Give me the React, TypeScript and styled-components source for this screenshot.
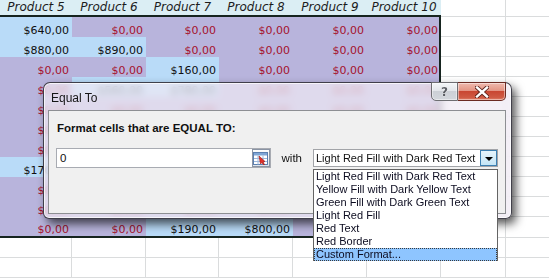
import React from 'react';
import styled, { createGlobalStyle } from 'styled-components';

const GlobalStyle = createGlobalStyle`
  * { box-sizing: border-box; }
  html, body { margin: 0; padding: 0; background: #ffffff; overflow: hidden; }
  body { width: 549px; height: 278px; }
`;

const COLS = [72, 74, 73, 74, 74, 74];
const PRODUCTS = ['Product 5', 'Product 6', 'Product 7', 'Product 8', 'Product 9', 'Product 10'];

type Cell = { v: string; hit?: boolean };
const z: Cell = { v: '$0,00' };
const b = (v: string): Cell => ({ v, hit: true });

const ROWS: Cell[][] = [
  [b('$640,00'), z, z, z, z, z],
  [b('$880,00'), b('$890,00'), z, z, z, z],
  [z, z, b('$160,00'), z, z, z],
  [z, b('$560,00'), b('$780,00'), z, z, z],
  [z, z, z, z, z, z],
  [z, z, z, b('$420,00'), z, z],
  [z, z, z, z, z, z],
  [b('$170,00'), z, z, z, z, z],
  [z, z, b('$330,00'), z, z, z],
  [z, z, z, z, z, z],
  [z, z, b('$190,00'), b('$800,00'), z, z],
];

const OPTIONS = [
  'Light Red Fill with Dark Red Text',
  'Yellow Fill with Dark Yellow Text',
  'Green Fill with Dark Green Text',
  'Light Red Fill',
  'Red Text',
  'Red Border',
  'Custom Format...',
];

const Page = styled.div`
  position: relative;
  width: 549px;
  height: 278px;
  overflow: hidden;
`;

const Sheet = styled.div`
  display: grid;
  grid-template-columns: ${COLS.map((c) => `${c}px`).join(' ')} 65px 1fr;
  grid-template-rows: 17px repeat(10, 20px) 21px 20px 20px;
  font-family: 'DejaVu Sans', Verdana, sans-serif;
`;

const HeadCell = styled.div`
  background: #dbeef4;
  border-bottom: 2px solid #16241f;
  display: flex;
  align-items: center;
  justify-content: center;
  font-size: 12px;
  font-style: italic;
  color: #1c1c1c;
  line-height: 15px;
  white-space: nowrap;
`;

const DataCell = styled.div<{ $hit?: boolean; $lastCol?: boolean; $lastRow?: boolean }>`
  background: ${(p) => (p.$hit ? '#b9dbf8' : '#b8b4dc')};
  color: ${(p) => (p.$hit ? '#101010' : '#a5122c')};
  display: flex;
  align-items: flex-end;
  justify-content: flex-end;
  padding-right: ${(p) => (p.$lastCol ? '1px' : '3px')};
  font-size: 11px;
  line-height: 13px;
  white-space: nowrap;
  border-right: ${(p) => (p.$lastCol ? '2px solid #16241f' : 'none')};
  border-bottom: ${(p) => (p.$lastRow ? '2px solid #16241f' : 'none')};
`;

const EmptyCell = styled.div<{ $noRight?: boolean }>`
  background: #ffffff;
  border-bottom: 1px solid #dadcdd;
  border-right: ${(p) => (p.$noRight ? 'none' : '1px solid #dadcdd')};
`;

const Dialog = styled.div`
  position: absolute;
  left: 43px;
  top: 82px;
  width: 469px;
  height: 137px;
  border: 1px solid rgba(35, 35, 45, 0.85);
  border-radius: 7px 7px 6px 6px;
  background: rgba(240, 234, 244, 0.7);
  backdrop-filter: blur(3.5px);
  box-shadow: 4px 5px 10px rgba(0, 0, 0, 0.65), inset 0 0 0 1px rgba(255, 255, 255, 0.7);
  display: flex;
  flex-direction: column;
  padding: 0 5px 4px 4px;
  font-family: 'Liberation Sans', Arial, sans-serif;
`;

const TitleBar = styled.div`
  height: 27px;
  display: flex;
  align-items: flex-start;
`;

const Title = styled.div`
  flex: 1;
  align-self: center;
  padding-left: 3px;
  padding-top: 2px;
  font-size: 12px;
  color: #151515;
`;

const CaptionButtons = styled.div`
  display: flex;
  margin-top: -1px;
`;

const CaptionButton = styled.div<{ $close?: boolean }>`
  width: ${(p) => (p.$close ? '48px' : '27px')};
  height: 19px;
  display: flex;
  align-items: center;
  justify-content: center;
  border: 1px solid ${(p) => (p.$close ? '#6b2a22' : '#6e6e72')};
  border-left: ${(p) => (p.$close ? 'none' : '1px solid #6e6e72')};
  border-radius: ${(p) => (p.$close ? '0 0 5px 0' : '0 0 0 5px')};
  background: ${(p) =>
    p.$close
      ? 'linear-gradient(#efb9ae 0%, #e39584 45%, #c94732 50%, #cf5a43 85%, #e0826b 100%)'
      : 'linear-gradient(#f4f6f8 0%, #e3e6ea 45%, #ccd0d6 50%, #d3d7dc 100%)'};
  box-shadow: inset 0 0 0 1px rgba(255, 255, 255, 0.45);
`;

const HelpGlyph = styled.span`
  font-family: 'DejaVu Sans', sans-serif;
  font-weight: bold;
  font-size: 12px;
  color: #5a5d63;
  text-shadow: 0 0 1px #fff, 0 0 1px #fff;
  line-height: 1;
`;

const Client = styled.div`
  flex: 1;
  background: #f0f0f0;
  border: 1px solid #8d8f93;
  padding: 10px 7px 0 7px;
  display: flex;
  flex-direction: column;
`;

const Prompt = styled.div`
  font-weight: bold;
  font-size: 11.5px;
  color: #111;
  line-height: 14px;
  padding-left: 1px;
`;

const FieldRow = styled.div`
  margin-top: 13px;
  display: flex;
  align-items: center;
`;

const RefInput = styled.div`
  width: 215px;
  height: 20px;
  background: #fff;
  border: 1px solid #a8abb2;
  display: flex;
  align-items: center;
  justify-content: space-between;
  padding: 0 0 0 3px;
  font-size: 11.5px;
  color: #111;
`;

const RefButton = styled.div`
  width: 18px;
  height: 18px;
  border: 1px solid #8a94a4;
  background: linear-gradient(#fdfdfd, #dfe4ea);
  display: flex;
  align-items: center;
  justify-content: center;
`;

const WithLabel = styled.span`
  margin: 0 11px;
  font-size: 11.5px;
  color: #111;
`;

const SelectWrap = styled.div`
  position: relative;
`;

const SelectBox = styled.div`
  width: 185px;
  height: 18px;
  background: #fff;
  border: 1px solid #a2a4a8;
  display: flex;
  align-items: center;
  justify-content: space-between;
  padding-left: 2px;
  font-size: 11px;
  color: #111;
  white-space: nowrap;
`;

const DropButton = styled.div`
  width: 17px;
  height: 16px;
  border: 1px solid #3c7fb1;
  background: linear-gradient(#e5f4fc, #c4e5f6);
  display: flex;
  align-items: center;
  justify-content: center;
`;

const Arrow = styled.div`
  width: 0;
  height: 0;
  border-left: 4px solid transparent;
  border-right: 4px solid transparent;
  border-top: 4px solid #000;
  margin-top: 2px;
`;

const ListBox = styled.div`
  position: absolute;
  top: 20px;
  left: 0;
  width: 185px;
  height: 92px;
  background: #fff;
  border: 1px solid #646464;
  display: flex;
  flex-direction: column;
`;

const Option = styled.div<{ $selected?: boolean }>`
  height: 13px;
  line-height: 13px;
  padding-left: 2px;
  font-size: 11px;
  color: #0c0c20;
  white-space: nowrap;
  background: ${(p) => (p.$selected ? '#8ec5ff' : 'transparent')};
  outline: ${(p) => (p.$selected ? '1px dotted #3a3a3a' : 'none')};
  outline-offset: -1px;
`;

const RefIcon = () => (
  <svg width="15" height="13" viewBox="0 0 15 13">
    <rect x="0.5" y="0.5" width="14" height="12" fill="#fff" stroke="#5b7fb0" />
    <rect x="1" y="1" width="13" height="2.5" fill="#7fa6d6" />
    <path d="M1 6.5H14M1 9.5H14M5 3.5V12.5M10 3.5V12.5" stroke="#9db8dc" strokeWidth="1" />
    <path d="M6 4L12 9.5L10 10L11.5 12.5L10.5 13L9 10.5L7.5 12Z" fill="#e2302a" stroke="#a01510" strokeWidth="0.6" />
  </svg>
);

const CloseIcon = () => (
  <svg width="14" height="12" viewBox="0 0 14 12">
    <path d="M2 1.5L12 10.5M12 1.5L2 10.5" stroke="#5a2018" strokeWidth="4.2" strokeLinecap="square" />
    <path d="M2 1.5L12 10.5M12 1.5L2 10.5" stroke="#ffffff" strokeWidth="2.4" strokeLinecap="square" />
  </svg>
);

export default function App() {
  return (
    <Page>
      <GlobalStyle />
      <Sheet>
        {PRODUCTS.map((p) => (
          <HeadCell key={p}>{p}</HeadCell>
        ))}
        <EmptyCell />
        <EmptyCell $noRight />
        {ROWS.map((row, r) => (
          <React.Fragment key={r}>
            {row.map((c, i) => (
              <DataCell key={i} $hit={c.hit} $lastCol={i === 5} $lastRow={r === ROWS.length - 1}>
                {c.v}
              </DataCell>
            ))}
            <EmptyCell />
            <EmptyCell $noRight />
          </React.Fragment>
        ))}
        {[0, 1].map((r) => (
          <React.Fragment key={`e${r}`}>
            {COLS.map((_, i) => (
              <EmptyCell key={i} />
            ))}
            <EmptyCell />
            <EmptyCell $noRight />
          </React.Fragment>
        ))}
      </Sheet>

      <Dialog>
        <TitleBar>
          <Title>Equal To</Title>
          <CaptionButtons>
            <CaptionButton>
              <HelpGlyph>?</HelpGlyph>
            </CaptionButton>
            <CaptionButton $close>
              <CloseIcon />
            </CaptionButton>
          </CaptionButtons>
        </TitleBar>
        <Client>
          <Prompt>Format cells that are EQUAL TO:</Prompt>
          <FieldRow>
            <RefInput>
              <span>0</span>
              <RefButton>
                <RefIcon />
              </RefButton>
            </RefInput>
            <WithLabel>with</WithLabel>
            <SelectWrap>
              <SelectBox>
                <span>{OPTIONS[0]}</span>
                <DropButton>
                  <Arrow />
                </DropButton>
              </SelectBox>
              <ListBox>
                {OPTIONS.map((o, i) => (
                  <Option key={o} $selected={i === OPTIONS.length - 1}>
                    {o}
                  </Option>
                ))}
              </ListBox>
            </SelectWrap>
          </FieldRow>
        </Client>
      </Dialog>
    </Page>
  );
}
